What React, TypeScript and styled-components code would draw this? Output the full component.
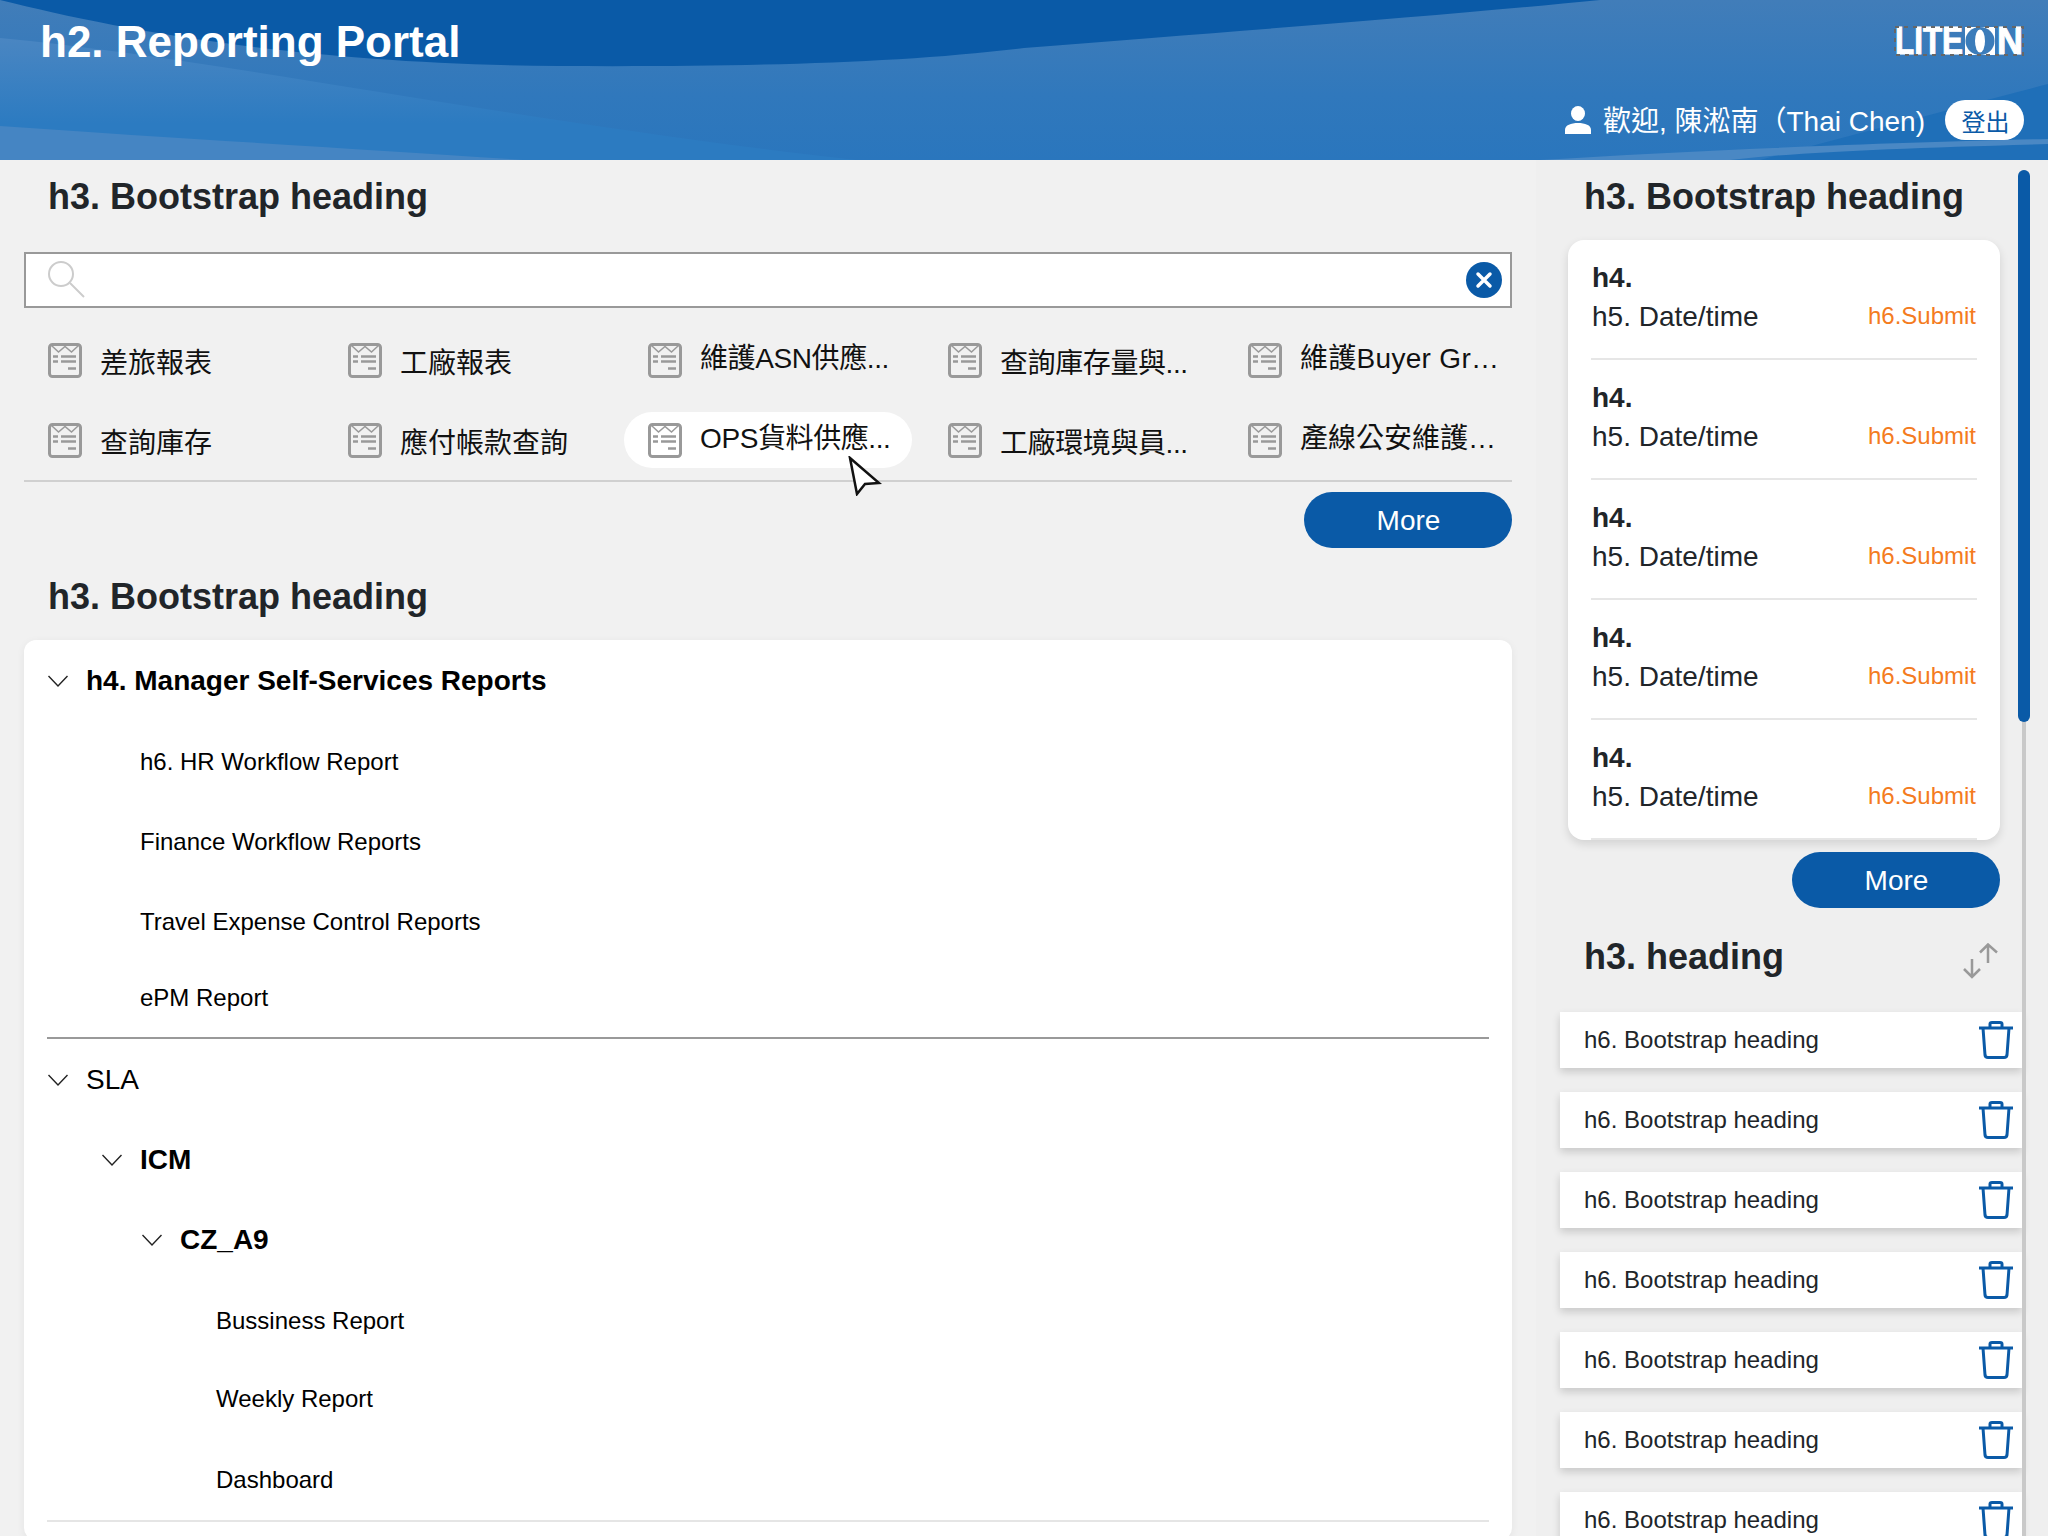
import React from 'react'
import styled, { createGlobalStyle } from 'styled-components'

const FONT = `"Liberation Sans", "Noto Sans CJK TC", sans-serif`
const BLUE = '#0a5aa7'

const GlobalStyle = createGlobalStyle`
    html, body {
        margin: 0;
        height: 100%;
        overflow: hidden;
        background: #f1f1f1;
        font-family: ${FONT};
    }
    * { box-sizing: border-box; }
`

const Page = styled.div`
    width: 2048px;
    height: 1536px;
    overflow: hidden;
    display: flex;
    flex-direction: column;
`

const Header = styled.header`
    position: relative;
    height: 160px;
    flex: none;
    display: flex;
    flex-direction: column;
    justify-content: space-between;
    padding: 26px 24px 20px 40px;
    overflow: hidden;
    background: ${BLUE};
`

const Waves = styled.svg`
    position: absolute;
    left: 0;
    top: 0;
`

const HeaderTop = styled.div`
    position: relative;
    display: flex;
    justify-content: space-between;
    align-items: flex-start;
`

const PortalTitle = styled.h2`
    margin: -9px 0 0;
    font-size: 44px;
    line-height: 50px;
    font-weight: 700;
    color: #fff;
`

const LogoSvg = styled.svg`
    margin-top: -8px;
`

const UserBar = styled.div`
    position: relative;
    display: flex;
    justify-content: flex-end;
    align-items: center;
    gap: 11px;
    height: 40px;
    color: #fff;
    font-size: 28px;
`

const UserName = styled.span`
    padding-bottom: 2px;
`

const LogoutButton = styled.button`
    width: 79px;
    height: 40px;
    margin-left: 9px;
    border: 0;
    padding: 0 0 0 2px;
    border-radius: 20px;
    background: #fff;
    color: ${BLUE};
    font-family: ${FONT};
    font-size: 24px;
`

const Body = styled.div`
    flex: 1;
    min-height: 0;
    display: grid;
    grid-template-columns: 1536px 512px;
`

const MainColumn = styled.main`
    position: relative;
    padding: 0 24px;
    overflow: hidden;
    background: #f1f1f1;
`

const SideColumn = styled.aside`
    position: relative;
    padding-left: 24px;
    overflow: hidden;
    background: #efefef;
`

const SectionHead = styled.div`
    display: flex;
    align-items: center;
    justify-content: space-between;
    height: 72px;
    padding: 2px 0 0 24px;
`

const SectionTitle = styled.h3`
    margin: 0;
    font-size: 36px;
    line-height: 44px;
    font-weight: 700;
    color: #212529;
`

const SearchBox = styled.div`
    display: flex;
    align-items: center;
    justify-content: space-between;
    height: 56px;
    margin-top: 20px;
    padding: 0 8px 0 22px;
    background: #fff;
    border: 2px solid #999;
`

const ClearButton = styled.span`
    width: 36px;
    height: 36px;
    border-radius: 50%;
    background: ${BLUE};
    display: flex;
    align-items: center;
    justify-content: center;
`

const ReportGrid = styled.div`
    display: grid;
    grid-template-columns: repeat(5, 288px);
    gap: 24px 12px;
    padding-top: 24px;
`

const ReportItem = styled.div`
    height: 56px;
    padding-left: 24px;
    display: flex;
    align-items: center;
    gap: 18px;
    border-radius: 28px;
    background: ${p => (p.$active ? '#fff' : 'transparent')};
    color: #111;
    font-size: 28px;
    white-space: nowrap;
`

const ReportLabel = styled.span`
    padding-bottom: ${p => (p.$raised ? 8 : 0)}px;
    padding-top: ${p => (p.$raised ? 0 : 1)}px;
    letter-spacing: ${p => p.$track ?? 0}px;
`

const Rule = styled.div`
    height: 2px;
    background: ${p => p.$color};
`

const GridRule = styled(Rule)`
    margin-top: 12px;
`

const MoreRow = styled.div`
    display: flex;
    justify-content: flex-end;
    margin-top: ${p => p.$top}px;
`

const MoreButton = styled.button`
    width: 208px;
    height: 56px;
    border: 0;
    padding: 1px 0 0 1px;
    border-radius: 28px;
    background: ${BLUE};
    color: #fff;
    font-family: ${FONT};
    font-size: 28px;
`

const Spaced = styled.div`
    margin-top: ${p => p.$top}px;
`

const TreeCard = styled.section`
    margin-top: 8px;
    height: 900px;
    padding: 0 23px;
    background: #fff;
    border-radius: 12px;
    box-shadow: 0 2px 8px rgba(0, 0, 0, 0.06);
`

const TreeRow = styled.div`
    height: ${p => p.$h ?? 80}px;
    display: flex;
    align-items: center;
    gap: 18px;
    padding-left: ${p => p.$indent}px;
    padding-top: ${p => p.$drop ?? 0}px;
    color: #000;
    font-size: ${p => (p.$leaf ? 24 : 28)}px;
    font-weight: ${p => (p.$bold ? 700 : 400)};
`

const TreeRule = styled(Rule)`
    margin: 3px 0 1px;
`

const FeedCard = styled.section`
    width: 432px;
    height: 600px;
    margin: 8px 0 0 8px;
    overflow: hidden;
    background: #fff;
    border-radius: 16px;
    box-shadow: 0 4px 10px rgba(0, 0, 0, 0.12);
`

const FeedItem = styled.div`
    height: 120px;
    margin: 0 23px;
    padding-top: 19px;
    border-bottom: 2px solid #e6e6e6;
    color: #212529;
`

const FeedTitle = styled.div`
    height: 38px;
    line-height: 38px;
    padding-left: 1px;
    font-size: 28px;
    font-weight: 700;
`

const FeedMeta = styled.div`
    height: 38px;
    display: flex;
    align-items: center;
    justify-content: space-between;
    padding: 0 1px;
    font-size: 28px;
`

const DateText = styled.span`
    padding-top: 2px;
`

const SubmitLink = styled.span`
    font-size: 24px;
    color: #f47b20;
`

const SideMore = styled(MoreRow)`
    width: 440px;
`

const SideHead = styled(Spaced)`
    width: 439px;
`

const SortSvg = styled.svg`
    margin-top: 8px;
`

const QueueList = styled.div`
    display: flex;
    flex-direction: column;
    gap: 24px;
    width: 462px;
    margin-top: 20px;
`

const QueueRow = styled.div`
    flex: none;
    height: 56px;
    display: flex;
    align-items: center;
    justify-content: space-between;
    padding: 0 9px 0 24px;
    background: #fff;
    color: #212529;
    font-size: 24px;
    box-shadow: 0 4px 8px rgba(0, 0, 0, 0.16);
`

const ScrollTrack = styled.div`
    position: absolute;
    top: 10px;
    bottom: 0;
    left: 486px;
    width: 4px;
    background: #c9c9c9;
`

const ScrollThumb = styled.div`
    position: absolute;
    top: 10px;
    left: 482px;
    width: 12px;
    height: 552px;
    border-radius: 6px;
    background: ${BLUE};
`

const Pointer = styled.svg`
    position: absolute;
    left: 848px;
    top: 296px;
`

const HeaderWaves = () => (
    <Waves width="2048" height="160" viewBox="0 0 2048 160">
        <defs>
            <linearGradient id="waveBase" x1="0" y1="0" x2="0" y2="1">
                <stop offset="0" stopColor="#417db9" />
                <stop offset="0.6" stopColor="#3078bc" />
                <stop offset="1" stopColor="#2a76bd" />
            </linearGradient>
            <linearGradient id="waveLeft" x1="0" y1="0" x2="0" y2="1">
                <stop offset="0" stopColor="#4a86c2" />
                <stop offset="0.7" stopColor="#2c7bc1" />
                <stop offset="1" stopColor="#2c7bc1" />
            </linearGradient>
        </defs>
        <rect width="2048" height="160" fill="url(#waveBase)" />
        <path
            d="M0 0 C 120 30 300 64 560 66 C 750 67 900 63 1024 48 C 1250 30 1450 15 1600 0 Z"
            fill="#0a5aa7"
        />
        <path d="M0 38 C 230 60 500 120 856 160 L0 160 Z" fill="url(#waveLeft)" />
        <path d="M0 126 C 200 140 380 150 523 160 L0 160 Z" fill="#4585c3" />
        <path d="M1760 160 C 1850 135 1950 110 2048 84 L2048 160 Z" fill="#1f6fb8" />
        <path
            d="M1540 160 C 1700 150 1900 142 2048 139 L2048 144 C 1900 148 1800 152 1730 160 Z"
            fill="#4a88c4"
        />
    </Waves>
)

const LiteonLogo = () => (
    <LogoSvg width="130" height="46" viewBox="0 -8 130 46">
        <text
            x="1"
            y="28"
            fontFamily={FONT}
            fontWeight="700"
            fontSize="38"
            fill="#fff"
            stroke="#fff"
            strokeWidth="1"
            textLength="68"
            lengthAdjust="spacingAndGlyphs"
        >
            LITE
        </text>
        <rect x="71" y="1" width="30" height="28" fill="#fff" />
        <ellipse cx="86" cy="15" rx="14.5" ry="14" fill="#3b7cba" />
        <ellipse cx="86" cy="15" rx="5" ry="11.5" fill="#fff" />
        <text
            x="103"
            y="28"
            fontFamily={FONT}
            fontWeight="700"
            fontSize="38"
            fill="#fff"
            stroke="#fff"
            strokeWidth="1"
            textLength="26"
            lengthAdjust="spacingAndGlyphs"
        >
            N
        </text>
        <rect x="1" y="1" width="128" height="28" fill="none" stroke="#666" strokeWidth="2" strokeDasharray="4 5" />
    </LogoSvg>
)

const UserIcon = () => (
    <svg width="28" height="28" viewBox="0 0 28 28" fill="#fff">
        <ellipse cx="14" cy="7.5" rx="7" ry="7.5" />
        <path d="M1 28 V24 C1 19 7 17 14 17 C21 17 27 19 27 24 V28 Z" />
    </svg>
)

const SearchIcon = () => (
    <svg width="38" height="38" viewBox="0 0 38 38" fill="none" stroke="#ccc" strokeWidth="2">
        <circle cx="13" cy="13" r="12" />
        <path d="M22 22 L36 36" />
    </svg>
)

const CloseIcon = () => (
    <svg width="18" height="18" viewBox="0 0 18 18" stroke="#fff" strokeWidth="3.5" strokeLinecap="round">
        <path d="M3 3 L15 15 M15 3 L3 15" />
    </svg>
)

const ReportIcon = () => (
    <svg width="34" height="35" viewBox="0 0 34 35" fill="none" stroke="#999" style={{ flex: 'none' }}>
        <rect x="1.5" y="1.5" width="31" height="32" rx="3" strokeWidth="3" />
        <path d="M4 3 L10.5 9 L17 3.5 L23.5 9 L30 3" strokeWidth="1.5" />
        <path d="M5 13.5 H10 M13 13.5 H28 M5 18.5 H10 M13 18.5 H28 M20 25.5 H28" strokeWidth="2.5" />
    </svg>
)

const Chevron = () => (
    <svg width="20" height="12" viewBox="0 0 20 12" fill="none" stroke="#222" strokeWidth="1.4" style={{ flex: 'none' }}>
        <path d="M0.5 1 L10 11 L19.5 1" />
    </svg>
)

const SortIcon = () => (
    <SortSvg width="36" height="36" viewBox="0 0 36 36" fill="none" stroke="#999" strokeWidth="2.5">
        <path d="M25 20 V2 M17 9.5 L25 1.5 L34 9.5" />
        <path d="M9 16 V34 M1 26 L9 34 L17 26" />
    </SortSvg>
)

const TrashIcon = () => (
    <svg width="34" height="38" viewBox="0 0 34 38" fill="none" stroke="#0a5aa7" strokeWidth="3" strokeLinejoin="round">
        <path d="M0 7 H34" />
        <path d="M11 6 V3 C11 2 12 1.5 13 1.5 H21 C22 1.5 23 2 23 3 V6" />
        <path d="M4 7 L6 34 C6.2 35.5 7 36.5 9 36.5 H25 C27 36.5 27.8 35.5 28 34 L30 7" />
    </svg>
)

const reports: { label: string; raised?: boolean; active?: boolean; track?: number }[] = [
    { label: '差旅報表' },
    { label: '工廠報表' },
    { label: '維護ASN供應...', raised: true, track: -0.4 },
    { label: '查詢庫存量與...', track: -0.4 },
    { label: '維護Buyer Gr…', raised: true, track: 0.3 },
    { label: '查詢庫存' },
    { label: '應付帳款查詢' },
    { label: 'OPS貨料供應...', raised: true, active: true, track: -0.4 },
    { label: '工廠環境與員...', track: -0.4 },
    { label: '產線公安維護…', raised: true },
]

const feed = [0, 1, 2, 3, 4]
const queue = [0, 1, 2, 3, 4, 5, 6, 7]

const App: React.FC = () => {
    return (
        <Page>
            <GlobalStyle />
            <Header>
                <HeaderWaves />
                <HeaderTop>
                    <PortalTitle>h2. Reporting Portal</PortalTitle>
                    <LiteonLogo />
                </HeaderTop>
                <UserBar>
                    <UserIcon />
                    <UserName>歡迎, 陳淞南（Thai Chen)</UserName>
                    <LogoutButton>登出</LogoutButton>
                </UserBar>
            </Header>
            <Body>
                <MainColumn>
                    <SectionHead>
                        <SectionTitle>h3. Bootstrap heading</SectionTitle>
                    </SectionHead>
                    <SearchBox>
                        <SearchIcon />
                        <ClearButton>
                            <CloseIcon />
                        </ClearButton>
                    </SearchBox>
                    <ReportGrid>
                        {reports.map(r => (
                            <ReportItem key={r.label} $active={r.active}>
                                <ReportIcon />
                                <ReportLabel $raised={r.raised} $track={r.track}>
                                    {r.label}
                                </ReportLabel>
                            </ReportItem>
                        ))}
                    </ReportGrid>
                    <GridRule $color="#d0d0d0" />
                    <MoreRow $top={10}>
                        <MoreButton>More</MoreButton>
                    </MoreRow>
                    <Spaced $top={12}>
                        <SectionHead>
                            <SectionTitle>h3. Bootstrap heading</SectionTitle>
                        </SectionHead>
                    </Spaced>
                    <TreeCard>
                        <TreeRow $indent={1} $bold $h={82}>
                            <Chevron />
                            h4. Manager Self-Services Reports
                        </TreeRow>
                        <TreeRow $indent={93} $leaf>h6. HR Workflow Report</TreeRow>
                        <TreeRow $indent={93} $leaf>Finance Workflow Reports</TreeRow>
                        <TreeRow $indent={93} $leaf>Travel Expense Control Reports</TreeRow>
                        <TreeRow $indent={93} $leaf $h={72}>ePM Report</TreeRow>
                        <TreeRule $color="#999" />
                        <TreeRow $indent={1}>
                            <Chevron />
                            SLA
                        </TreeRow>
                        <TreeRow $indent={55} $bold>
                            <Chevron />
                            ICM
                        </TreeRow>
                        <TreeRow $indent={95} $bold>
                            <Chevron />
                            CZ_A9
                        </TreeRow>
                        <TreeRow $indent={169} $leaf $h={81}>Bussiness Report</TreeRow>
                        <TreeRow $indent={169} $leaf $h={75}>Weekly Report</TreeRow>
                        <TreeRow $indent={169} $leaf $h={84} $drop={4}>Dashboard</TreeRow>
                        <Rule $color="#e5e5e5" />
                    </TreeCard>
                    <Pointer width="34" height="40" viewBox="0 0 34 40">
                        <path
                            d="M2 2 L31 27 L17 28 L9 38 Z"
                            fill="#fff"
                            stroke="#111"
                            strokeWidth="2.5"
                            strokeLinejoin="miter"
                        />
                    </Pointer>
                </MainColumn>
                <SideColumn>
                    <SectionHead>
                        <SectionTitle>h3. Bootstrap heading</SectionTitle>
                    </SectionHead>
                    <FeedCard>
                        {feed.map(i => (
                            <FeedItem key={i}>
                                <FeedTitle>h4.</FeedTitle>
                                <FeedMeta>
                                    <DateText>h5. Date/time</DateText>
                                    <SubmitLink>h6.Submit</SubmitLink>
                                </FeedMeta>
                            </FeedItem>
                        ))}
                    </FeedCard>
                    <SideMore $top={12}>
                        <MoreButton>More</MoreButton>
                    </SideMore>
                    <SideHead $top={12}>
                        <SectionHead>
                            <SectionTitle>h3. heading</SectionTitle>
                            <SortIcon />
                        </SectionHead>
                    </SideHead>
                    <ScrollTrack />
                    <QueueList>
                        {queue.map(i => (
                            <QueueRow key={i}>
                                h6. Bootstrap heading
                                <TrashIcon />
                            </QueueRow>
                        ))}
                    </QueueList>
                    <ScrollThumb />
                </SideColumn>
            </Body>
        </Page>
    )
}

export default App
